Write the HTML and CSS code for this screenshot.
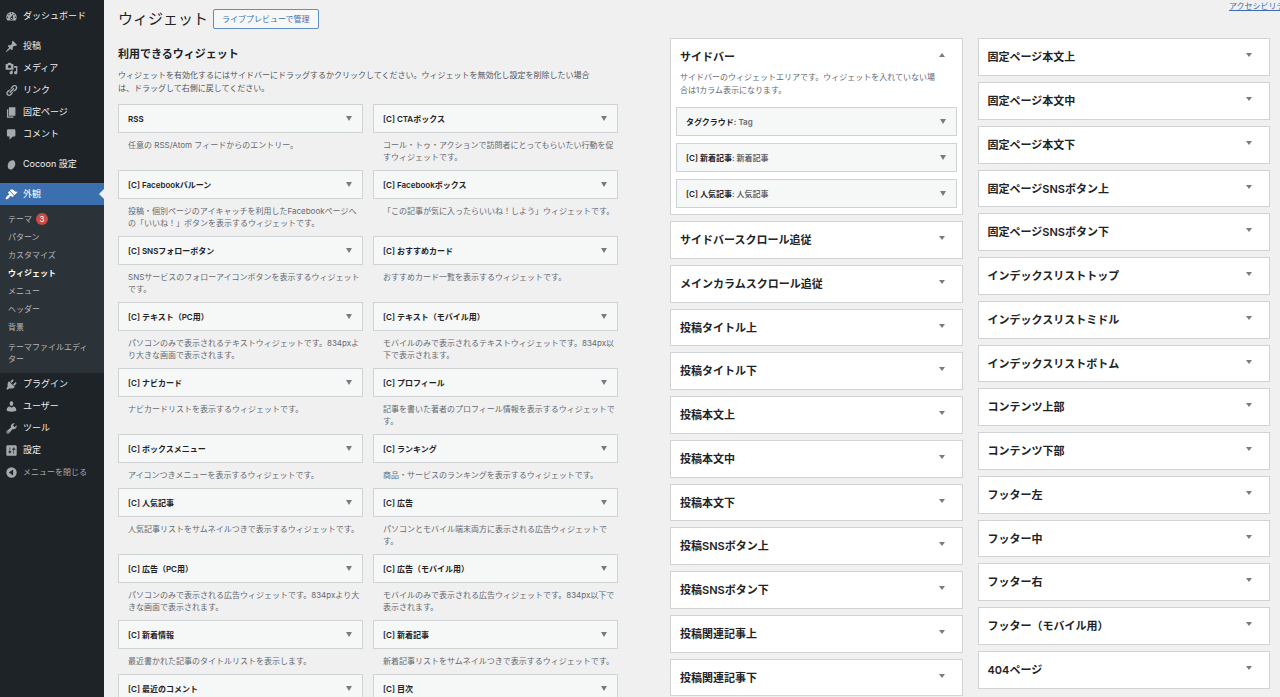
FILE: index.html
```html
<!DOCTYPE html>
<html lang="ja">
<head>
<meta charset="utf-8">
<title>ウィジェット</title>
<link rel="stylesheet" href="styles.css">
</head>
<body>
<div class="shell">
<nav class="menu" aria-label="メインメニュー">
  <ul class="menu-list">
    <li><a class="menu-item" href="#"><svg class="icon" viewBox="0 0 20 20"><path d="M3.76 16h12.48c1.1-1.37 1.76-3.11 1.76-5 0-4.42-3.58-8-8-8s-8 3.58-8 8c0 1.89.66 3.63 1.76 5zM10 4c.55 0 1 .45 1 1s-.45 1-1 1-1-.45-1-1 .45-1 1-1zM6 6c.55 0 1 .45 1 1s-.45 1-1 1-1-.45-1-1 .45-1 1-1zm8 0c.55 0 1 .45 1 1s-.45 1-1 1-1-.45-1-1 .45-1 1-1zm-5.37 5.55L12 7v6c0 1.1-.9 2-2 2s-2-.9-2-2c0-.57.24-1.08.63-1.45zM4 10c.55 0 1 .45 1 1s-.45 1-1 1-1-.45-1-1 .45-1 1-1zm12 0c.55 0 1 .45 1 1s-.45 1-1 1-1-.45-1-1 .45-1 1-1zm-5 3c0-.55-.45-1-1-1s-1 .45-1 1 .45 1 1 1 1-.45 1-1z"/></svg>ダッシュボード</a></li>
    <li class="menu-gap"><a class="menu-item" href="#"><svg class="icon" viewBox="0 0 20 20"><path d="M10.44 3.02l1.82-1.82 6.36 6.35-1.83 1.82c-1.05-.68-2.48-.57-3.41.36l-.75.75c-.92.93-1.04 2.35-.35 3.41l-1.83 1.82-2.41-2.41-2.8 2.79c-.42.42-3.38 2.71-3.8 2.29s1.86-3.39 2.28-3.81l2.79-2.79L4.1 9.36l1.83-1.82c1.05.69 2.48.57 3.4-.36l.75-.75c.93-.92 1.05-2.35.36-3.41z"/></svg>投稿</a></li>
    <li><a class="menu-item" href="#"><svg class="icon" viewBox="0 0 20 20"><path d="M13 11V4c0-.55-.45-1-1-1h-1.67L9 1H5L3.67 3H2c-.55 0-1 .45-1 1v7c0 .55.45 1 1 1h10c.55 0 1-.45 1-1zM7 4.5c1.38 0 2.5 1.12 2.5 2.5S8.38 9.5 7 9.5 4.5 8.38 4.5 7 5.62 4.5 7 4.5zM14 6h5v10.5c0 1.38-1.12 2.5-2.5 2.5S14 17.88 14 16.5s1.12-2.5 2.5-2.5c.17 0 .34.02.5.05V9h-3V6zm-4 8.05V13h2v3.5c0 1.38-1.12 2.5-2.5 2.5S7 17.88 7 16.5 8.12 14 9.5 14c.17 0 .34.02.5.05z"/></svg>メディア</a></li>
    <li><a class="menu-item" href="#"><svg class="icon" viewBox="0 0 20 20"><path d="M17.74 2.76c1.68 1.69 1.68 4.41 0 6.1l-1.53 1.52c-1.12 1.12-2.7 1.47-4.14 1.09l2.62-2.61.76-.77.76-.76c.84-.84.84-2.2 0-3.04-.84-.85-2.2-.85-3.04 0l-.77.76-3.38 3.38c-.37-1.44-.02-3.02 1.1-4.14l1.52-1.53c1.69-1.68 4.42-1.68 6.1 0zM8.59 13.43l5.34-5.34c.42-.42.42-1.1 0-1.52-.44-.43-1.13-.39-1.53 0l-5.33 5.34c-.42.42-.42 1.1 0 1.52.44.43 1.13.39 1.52 0zm-.76 2.29l4.14-4.15c.38 1.44.03 3.02-1.09 4.14l-1.52 1.53c-1.69 1.68-4.41 1.68-6.1 0-1.68-1.68-1.68-4.42 0-6.1l1.53-1.52c1.12-1.12 2.7-1.47 4.14-1.1l-4.14 4.15c-.85.84-.85 2.2 0 3.05.84.84 2.2.84 3.04 0z"/></svg>リンク</a></li>
    <li><a class="menu-item" href="#"><svg class="icon" viewBox="0 0 20 20"><path d="M6 15V2h10v13H6zm-1 1h8v2H3V5h2v11z"/></svg>固定ページ</a></li>
    <li><a class="menu-item" href="#"><svg class="icon" viewBox="0 0 20 20"><path d="M5 2h9c1.1 0 2 .9 2 2v7c0 1.1-.9 2-2 2h-2l-5 5v-5H5c-1.1 0-2-.9-2-2V4c0-1.1.9-2 2-2z"/></svg>コメント</a></li>
    <li class="menu-gap"><a class="menu-item" href="#"><svg class="icon" viewBox="0 0 20 20"><ellipse cx="10" cy="10.500" rx="5.500" ry="7.500" transform="rotate(24 10 10.500)"/></svg>Cocoon 設定</a></li>
    <li class="menu-gap"><a class="menu-item current" href="#"><svg class="icon" viewBox="0 0 20 20"><path d="M14.48 11.06L7.41 3.99l1.5-1.5c.5-.56 2.3-.47 3.51.32 1.21.8 1.43 1.28 2.91 2.1 1.18.64 2.45 1.26 4.45.85zm-.71.71L6.7 4.7 4.93 6.47c-.39.39-.39 1.02 0 1.41l1.06 1.06c.39.39.39 1.03 0 1.42-.6.6-1.43 1.11-2.21 1.69-.35.26-.7.53-1.01.84C1.43 14.23.4 16.08 1.4 17.07c.99 1 2.84-.03 4.18-1.36.31-.31.58-.66.85-1.02.57-.78 1.08-1.61 1.69-2.21.39-.39 1.02-.39 1.41 0l1.06 1.06c.39.39 1.02.39 1.41 0z"/></svg>外観</a>
      <ul class="submenu">
        <li><a href="#">テーマ<span class="badge">3</span></a></li>
        <li><a href="#">パターン</a></li>
        <li><a href="#">カスタマイズ</a></li>
        <li><a class="active" href="#">ウィジェット</a></li>
        <li><a href="#">メニュー</a></li>
        <li><a href="#">ヘッダー</a></li>
        <li><a href="#">背景</a></li>
        <li><a class="two-line" href="#">テーマファイルエディ<br>ター</a></li>
      </ul>
    </li>
    <li><a class="menu-item" href="#"><svg class="icon" viewBox="0 0 20 20"><path d="M13.11 4.36L9.87 7.6 8 5.73l3.24-3.24c.35-.34 1.05-.2 1.56.32.52.51.66 1.21.31 1.55zm-8 1.77l.91-1.12 9.01 9.01-1.19.84c-.71.71-2.63 1.16-3.82 1.16H6.14L4.9 17.26c-.59.59-1.54.59-2.12 0-.59-.58-.59-1.53 0-2.12l1.24-1.24v-3.88c0-1.13.4-3.19 1.09-3.89zm7.26 3.97l3.24-3.24c.34-.35 1.04-.21 1.55.31.52.51.66 1.21.31 1.55l-3.24 3.25z"/></svg>プラグイン</a></li>
    <li><a class="menu-item" href="#"><svg class="icon" viewBox="0 0 20 20"><path d="M10 9.25c-2.27 0-2.73-3.44-2.73-3.44C7 4.02 7.82 2 9.97 2c2.16 0 2.98 2.02 2.71 3.81 0 0-.41 3.44-2.68 3.44zm0 2.57L12.72 10c2.39 0 4.52 2.33 4.52 4.53v2.49s-3.65 1.13-7.24 1.13c-3.65 0-7.24-1.13-7.24-1.13v-2.49c0-2.25 1.94-4.48 4.47-4.48z"/></svg>ユーザー</a></li>
    <li><a class="menu-item" href="#"><svg class="icon" viewBox="0 0 20 20"><path d="M16.68 9.77c-1.34 1.34-3.3 1.67-4.95.99l-5.41 6.52c-.99.99-2.59.99-3.58 0s-.99-2.59 0-3.57l6.52-5.42c-.68-1.65-.35-3.61.99-4.95 1.28-1.28 3.12-1.62 4.72-1.06l-2.89 2.89 2.82 2.82 2.86-2.87c.53 1.58.18 3.39-1.08 4.65zM3.81 16.21c.4.39 1.04.39 1.43 0 .4-.4.4-1.04 0-1.43-.39-.4-1.03-.4-1.43 0-.39.39-.39 1.03 0 1.43z"/></svg>ツール</a></li>
    <li><a class="menu-item" href="#"><svg class="icon" viewBox="0 0 20 20"><path d="M18 16V4c0-1.1-.9-2-2-2H4c-1.1 0-2 .9-2 2v12c0 1.1.9 2 2 2h12c1.1 0 2-.9 2-2zM8 11h1c.55 0 1 .45 1 1s-.45 1-1 1H8v1.5c0 .28-.22.5-.5.5s-.5-.22-.5-.5V13H6c-.55 0-1-.45-1-1s.45-1 1-1h1V5.5c0-.28.22-.5.5-.5s.5.22.5.5V11zm5-2h-1c-.55 0-1-.45-1-1s.45-1 1-1h1V5.500c0-.28.22-.5.5-.5s.5.22.5.5V7h1c.55 0 1 .45 1 1s-.45 1-1 1h-1v5.500c0 .28-.22.5-.5.5s-.5-.22-.5-.5V9z"/></svg>設定</a></li>
    <li><button class="menu-item collapse" type="button"><svg class="icon" viewBox="0 0 20 20"><path fill-rule="evenodd" d="M10 2a8 8 0 1 0 0 16 8 8 0 0 0 0-16zM12.500 5.500v9L6 10z"/></svg>メニューを閉じる</button></li>
  </ul>
</nav>

<main class="content">
  <header class="page-head">
    <h1>ウィジェット</h1>
    <button class="preview" type="button">ライブプレビューで管理</button>
    <a class="access" href="#">アクセシビリテ</a>
  </header>

  <div class="columns">
    <section class="available">
      <h2>利用できるウィジェット</h2>
      <p class="intro">ウィジェットを有効化するにはサイドバーにドラッグするかクリックしてください。ウィジェットを無効化し設定を削除したい場合<br>は、ドラッグして右側に戻してください。</p>
      <ul class="widgets">
        <li><button class="bar" type="button">RSS</button><p>任意の RSS/Atom フィードからのエントリー。</p></li>
        <li><button class="bar" type="button">[C] CTAボックス</button><p>コール・トゥ・アクションで訪問者にとってもらいたい行動を促<br>すウィジェットです。</p></li>
        <li><button class="bar" type="button">[C] Facebookバルーン</button><p>投稿・個別ページのアイキャッチを利用したFacebookページへ<br>の「いいね！」ボタンを表示するウィジェットです。</p></li>
        <li><button class="bar" type="button">[C] Facebookボックス</button><p>「この記事が気に入ったらいいね！しよう」ウィジェットです。</p></li>
        <li><button class="bar" type="button">[C] SNSフォローボタン</button><p>SNSサービスのフォローアイコンボタンを表示するウィジェット<br>です。</p></li>
        <li><button class="bar" type="button">[C] おすすめカード</button><p>おすすめカード一覧を表示するウィジェットです。</p></li>
        <li><button class="bar" type="button">[C] テキスト（PC用）</button><p>パソコンのみで表示されるテキストウィジェットです。834pxよ<br>り大きな画面で表示されます。</p></li>
        <li><button class="bar" type="button">[C] テキスト（モバイル用）</button><p>モバイルのみで表示されるテキストウィジェットです。834px以<br>下で表示されます。</p></li>
        <li><button class="bar" type="button">[C] ナビカード</button><p>ナビカードリストを表示するウィジェットです。</p></li>
        <li><button class="bar" type="button">[C] プロフィール</button><p>記事を書いた著者のプロフィール情報を表示するウィジェットで<br>す。</p></li>
        <li><button class="bar" type="button">[C] ボックスメニュー</button><p>アイコンつきメニューを表示するウィジェットです。</p></li>
        <li><button class="bar" type="button">[C] ランキング</button><p>商品・サービスのランキングを表示するウィジェットです。</p></li>
        <li><button class="bar" type="button">[C] 人気記事</button><p>人気記事リストをサムネイルつきで表示するウィジェットです。</p></li>
        <li><button class="bar" type="button">[C] 広告</button><p>パソコンとモバイル端末両方に表示される広告ウィジェットで<br>す。</p></li>
        <li><button class="bar" type="button">[C] 広告（PC用）</button><p>パソコンのみで表示される広告ウィジェットです。834pxより大<br>きな画面で表示されます。</p></li>
        <li><button class="bar" type="button">[C] 広告（モバイル用）</button><p>モバイルのみで表示される広告ウィジェットです。834px以下で<br>表示されます。</p></li>
        <li><button class="bar" type="button">[C] 新着情報</button><p>最近書かれた記事のタイトルリストを表示します。</p></li>
        <li><button class="bar" type="button">[C] 新着記事</button><p>新着記事リストをサムネイルつきで表示するウィジェットです。</p></li>
        <li><button class="bar" type="button">[C] 最近のコメント</button></li>
        <li><button class="bar" type="button">[C] 目次</button></li>
      </ul>
    </section>

    <section class="areas">
      <div class="area-column">
        <div class="area open">
          <button class="area-head" type="button">サイドバー</button>
          <p>サイドバーのウィジェットエリアです。ウィジェットを入れていない場<br>合は1カラム表示になります。</p>
          <div class="placed">
            <button class="bar" type="button"><span>タグクラウド<span class="name">: Tag</span></span></button>
            <button class="bar" type="button"><span>[C] 新着記事<span class="name">: 新着記事</span></span></button>
            <button class="bar" type="button"><span>[C] 人気記事<span class="name">: 人気記事</span></span></button>
          </div>
        </div>
        <div class="area"><button class="area-head" type="button">サイドバースクロール追従</button></div>
        <div class="area"><button class="area-head" type="button">メインカラムスクロール追従</button></div>
        <div class="area"><button class="area-head" type="button">投稿タイトル上</button></div>
        <div class="area"><button class="area-head" type="button">投稿タイトル下</button></div>
        <div class="area"><button class="area-head" type="button">投稿本文上</button></div>
        <div class="area"><button class="area-head" type="button">投稿本文中</button></div>
        <div class="area"><button class="area-head" type="button">投稿本文下</button></div>
        <div class="area"><button class="area-head" type="button">投稿SNSボタン上</button></div>
        <div class="area"><button class="area-head" type="button">投稿SNSボタン下</button></div>
        <div class="area"><button class="area-head" type="button">投稿関連記事上</button></div>
        <div class="area"><button class="area-head" type="button">投稿関連記事下</button></div>
      </div>
      <div class="area-column">
        <div class="area"><button class="area-head" type="button">固定ページ本文上</button></div>
        <div class="area"><button class="area-head" type="button">固定ページ本文中</button></div>
        <div class="area"><button class="area-head" type="button">固定ページ本文下</button></div>
        <div class="area"><button class="area-head" type="button">固定ページSNSボタン上</button></div>
        <div class="area"><button class="area-head" type="button">固定ページSNSボタン下</button></div>
        <div class="area"><button class="area-head" type="button">インデックスリストトップ</button></div>
        <div class="area"><button class="area-head" type="button">インデックスリストミドル</button></div>
        <div class="area"><button class="area-head" type="button">インデックスリストボトム</button></div>
        <div class="area"><button class="area-head" type="button">コンテンツ上部</button></div>
        <div class="area"><button class="area-head" type="button">コンテンツ下部</button></div>
        <div class="area"><button class="area-head" type="button">フッター左</button></div>
        <div class="area"><button class="area-head" type="button">フッター中</button></div>
        <div class="area"><button class="area-head" type="button">フッター右</button></div>
        <div class="area"><button class="area-head" type="button">フッター（モバイル用）</button></div>
        <div class="area"><button class="area-head" type="button">404ページ</button></div>
      </div>
    </section>
  </div>
</main>
</div>
</body>
</html>
```
FILE: styles.css
```css
* { box-sizing: border-box; }

body {
  margin: 0;
  background: #f0f0f0;
  color: #1d2327;
  font-family: Inter, "Noto Sans CJK JP", sans-serif;
  font-size: 8px;
  line-height: 12px;
}

ul { list-style: none; margin: 0; padding: 0; }
h1, h2, p { margin: 0; }
button { font: inherit; color: inherit; text-align: left; cursor: pointer; }
a { text-decoration: none; }

.shell { display: flex; height: 100vh; overflow: hidden; }

/* Admin menu */
.menu { flex: 0 0 104px; background: #1d2327; padding-top: 5px; }
.menu-gap { margin-top: 8px; }
.menu-item {
  display: flex;
  align-items: center;
  gap: 5px;
  width: 100%;
  height: 22px;
  padding: 0 5px;
  border: 0;
  background: none;
  color: #f0f0f1;
  font-size: 9px;
  white-space: nowrap;
}
.icon { width: 13px; height: 13px; fill: #a7aaad; }
.collapse { color: #a7aaad; font-size: 8px; }
.current { position: relative; background: #3b6fb0; color: #fff; }
.current .icon { fill: #fff; }
.current::after {
  content: "";
  position: absolute;
  top: 6px;
  right: 0;
  border: 5px solid transparent;
  border-left-width: 0;
  border-right-color: #f0f0f0;
}
.submenu { background: #2c3338; padding: 5px 0 6px; }
.submenu a {
  display: flex;
  align-items: center;
  gap: 4px;
  height: 18px;
  padding: 0 8px;
  color: #b4b9be;
}
.submenu .two-line { display: block; height: auto; padding: 5px 8px 2px; }
.submenu .active { color: #fff; font-weight: 600; }
.badge {
  min-width: 12px;
  height: 12px;
  border-radius: 6px;
  background: #ca4a45;
  color: #fff;
  text-align: center;
}

/* Page heading */
.content { flex: 1; min-width: 0; padding: 0 10px 0 14px; }
.page-head { display: flex; align-items: center; gap: 5px; height: 38px; }
.page-head h1 { font-size: 15px; line-height: 20px; font-weight: 400; white-space: nowrap; }
.preview {
  height: 20px;
  padding: 0 8px;
  border: 1px solid #5f8fc6;
  border-radius: 2px;
  background: #f6f7f7;
  color: #3b6fb0;
  white-space: nowrap;
}
.access {
  align-self: flex-start;
  width: 41px;
  margin-left: auto;
  color: #3b6fb0;
  text-decoration: underline;
  white-space: nowrap;
}

.columns { display: grid; grid-template-columns: 5fr 6fr; gap: 52px; }

/* Available widgets */
.available { min-width: 0; padding-top: 8px; }
.available h2 { font-size: 11px; line-height: 16px; font-weight: 600; }
.intro { margin: 7px 0 9px; color: #50575e; line-height: 13px; white-space: nowrap; }
.widgets { display: grid; grid-template-columns: 1fr 1fr; column-gap: 10px; row-gap: 7px; }
.widgets li { min-width: 0; }
.widgets p { padding: 6px 0 0 10px; color: #646970; white-space: nowrap; }

.bar {
  display: flex;
  align-items: center;
  justify-content: space-between;
  width: 100%;
  height: 29px;
  padding: 0 10px 0 9px;
  border: 1px solid #d0d3d6;
  background: #f6f7f7;
  font-weight: 600;
}
.bar::after, .area-head::after {
  content: "";
  border: 3px solid transparent;
  border-top: 5px solid #787c82;
  border-bottom: 0;
}

/* Widget areas */
.areas { display: grid; grid-template-columns: 1fr 1fr; gap: 15px; align-items: start; min-width: 0; }
.area { margin-bottom: 6px; padding-bottom: 1px; border: 1px solid #d0d3d6; background: #fff; }
.area:nth-child(4n) { padding-bottom: 0; }
.area-head {
  display: flex;
  align-items: center;
  justify-content: space-between;
  width: 100%;
  height: 35px;
  padding: 0 17px 0 9px;
  border: 0;
  background: none;
  font-size: 11px;
  line-height: 16px;
  font-weight: 600;
}
.area-head::after { margin-bottom: 3px; border-top-width: 4px; }
.open { padding-bottom: 6px; }
.open .area-head { height: 32px; padding-top: 3px; }
.open .area-head::after { border-top: 0; border-bottom: 4px solid #787c82; }
.open p { padding: 0 9px; color: #646970; line-height: 13px; white-space: nowrap; }
.placed { display: grid; gap: 7px; padding: 10px 5px 0; }
.placed .name { color: #646970; }
```
